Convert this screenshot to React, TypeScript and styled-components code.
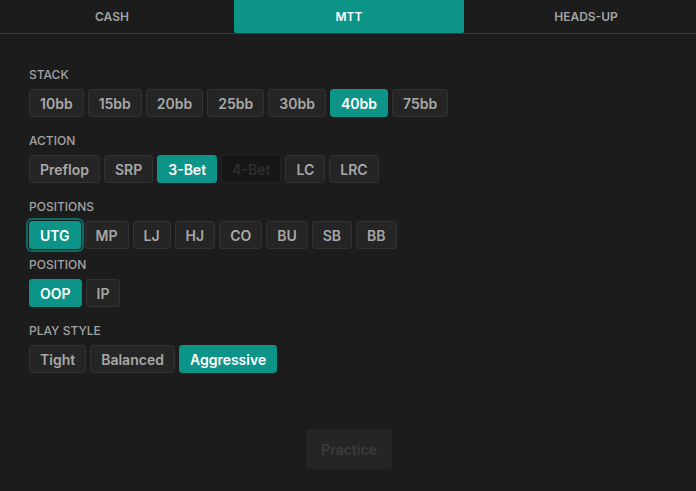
import * as React from 'react'
import styled, { createGlobalStyle } from 'styled-components'

const TEAL = '#0d9488'

const GlobalStyle = createGlobalStyle`
  html, body {
    margin: 0;
    padding: 0;
    background: #1c1c1c;
    overflow: hidden;
  }
  body {
    font-family: Inter, 'Noto Sans', sans-serif;
    -webkit-font-smoothing: antialiased;
  }
`

type Option = { label: string; disabled?: boolean }

const stacks: Option[] = ['10bb', '15bb', '20bb', '25bb', '30bb', '40bb', '75bb'].map(label => ({ label }))
const actions: Option[] = [
  { label: 'Preflop' },
  { label: 'SRP' },
  { label: '3-Bet' },
  { label: '4-Bet', disabled: true },
  { label: 'LC' },
  { label: 'LRC' }
]
const positions: Option[] = ['UTG', 'MP', 'LJ', 'HJ', 'CO', 'BU', 'SB', 'BB'].map(label => ({ label }))
const sides: Option[] = [{ label: 'OOP' }, { label: 'IP' }]
const styles: Option[] = [{ label: 'Tight' }, { label: 'Balanced' }, { label: 'Aggressive' }]

const tabs = ['Cash', 'MTT', 'Heads-up']

export default function App() {
  const [tab, setTab] = React.useState('MTT')
  const [stack, setStack] = React.useState('40bb')
  const [action, setAction] = React.useState('3-Bet')
  const [position, setPosition] = React.useState('UTG')
  const [side, setSide] = React.useState('OOP')
  const [style, setStyle] = React.useState('Aggressive')

  return (
    <Page>
      <GlobalStyle />
      <TabBar>
        {tabs.map(t => (
          <Tab key={t} $active={t === tab} onClick={() => setTab(t)}>
            {t}
          </Tab>
        ))}
      </TabBar>
      <Content>
        <Section>
          <Label>Stack</Label>
          <ChipGroup options={stacks} value={stack} onChange={setStack} />
        </Section>
        <Section>
          <Label>Action</Label>
          <ChipGroup options={actions} value={action} onChange={setAction} />
        </Section>
        <Section $space={8}>
          <Label>Positions</Label>
          <ChipGroup options={positions} value={position} onChange={setPosition} focused="UTG" />
        </Section>
        <Section>
          <Label>Position</Label>
          <ChipGroup options={sides} value={side} onChange={setSide} />
        </Section>
        <Section>
          <Label>Play style</Label>
          <ChipGroup options={styles} value={style} onChange={setStyle} />
        </Section>
        <Footer>
          <PracticeButton disabled>Practice</PracticeButton>
        </Footer>
      </Content>
    </Page>
  )
}

interface ChipGroupProps {
  options: Option[]
  value: string
  onChange: (v: string) => void
  focused?: string
}

function ChipGroup({ options, value, onChange, focused }: ChipGroupProps) {
  return (
    <Chips>
      {options.map(o => (
        <Chip
          key={o.label}
          $active={o.label === value}
          $focus={o.label === focused}
          disabled={o.disabled}
          onClick={() => onChange(o.label)}
        >
          {o.label}
        </Chip>
      ))}
    </Chips>
  )
}

const Page = styled.div`
  width: 696px;
  min-height: 491px;
  background: #1c1c1c;
`

const TabBar = styled.div`
  display: grid;
  grid-template-columns: repeat(3, 230px);
  column-gap: 7px;
  margin: 0 -3px;
  border-bottom: 1px solid #3a3a3a;
`

const Tab = styled.button<{ $active: boolean }>`
  height: 33px;
  border: none;
  border-radius: 0 0 2px 2px;
  background: ${({ $active }) => ($active ? TEAL : 'transparent')};
  color: ${({ $active }) => ($active ? '#ffffff' : '#a3a3a3')};
  font-family: inherit;
  font-size: 12px;
  font-weight: 600;
  text-transform: uppercase;
  cursor: pointer;
`

const Content = styled.div`
  display: flex;
  flex-direction: column;
  padding: 33px 27px 0 29px;
`

const Section = styled.div<{ $space?: number }>`
  display: flex;
  flex-direction: column;
  gap: 6px;
  margin-bottom: ${({ $space = 16 }) => $space}px;
`

const Label = styled.div`
  font-size: 12px;
  line-height: 16px;
  font-weight: 500;
  color: #a3a3a3;
  text-transform: uppercase;
`

const Chips = styled.div`
  display: flex;
  flex-flow: row wrap;
  gap: 4px;
`

interface ChipProps {
  $active: boolean
  $focus: boolean
}

const Chip = styled.button<ChipProps>`
  height: 28px;
  padding: 0 10px;
  border-radius: 3px;
  border: 1px solid ${({ $active }) => ($active ? TEAL : '#323232')};
  background: ${({ $active }) => ($active ? TEAL : '#252525')};
  color: ${({ $active }) => ($active ? '#ffffff' : '#a8a8a8')};
  font-family: inherit;
  font-size: 14px;
  font-weight: 600;
  cursor: pointer;
  ${({ $focus }) => $focus && `box-shadow: 0 0 0 1px #1c1c1c, 0 0 0 3px #0b6b63;`}
  &:disabled {
    background: #161616;
    border-color: #222222;
    color: #2e2e2e;
    cursor: default;
  }
`

const Footer = styled.div`
  display: flex;
  justify-content: center;
  padding-top: 40px;
`

const PracticeButton = styled.button`
  width: 86px;
  height: 40px;
  border: none;
  border-radius: 3px;
  background: #252525;
  color: #3c3c3c;
  font-family: inherit;
  font-size: 14px;
  font-weight: 600;
`
